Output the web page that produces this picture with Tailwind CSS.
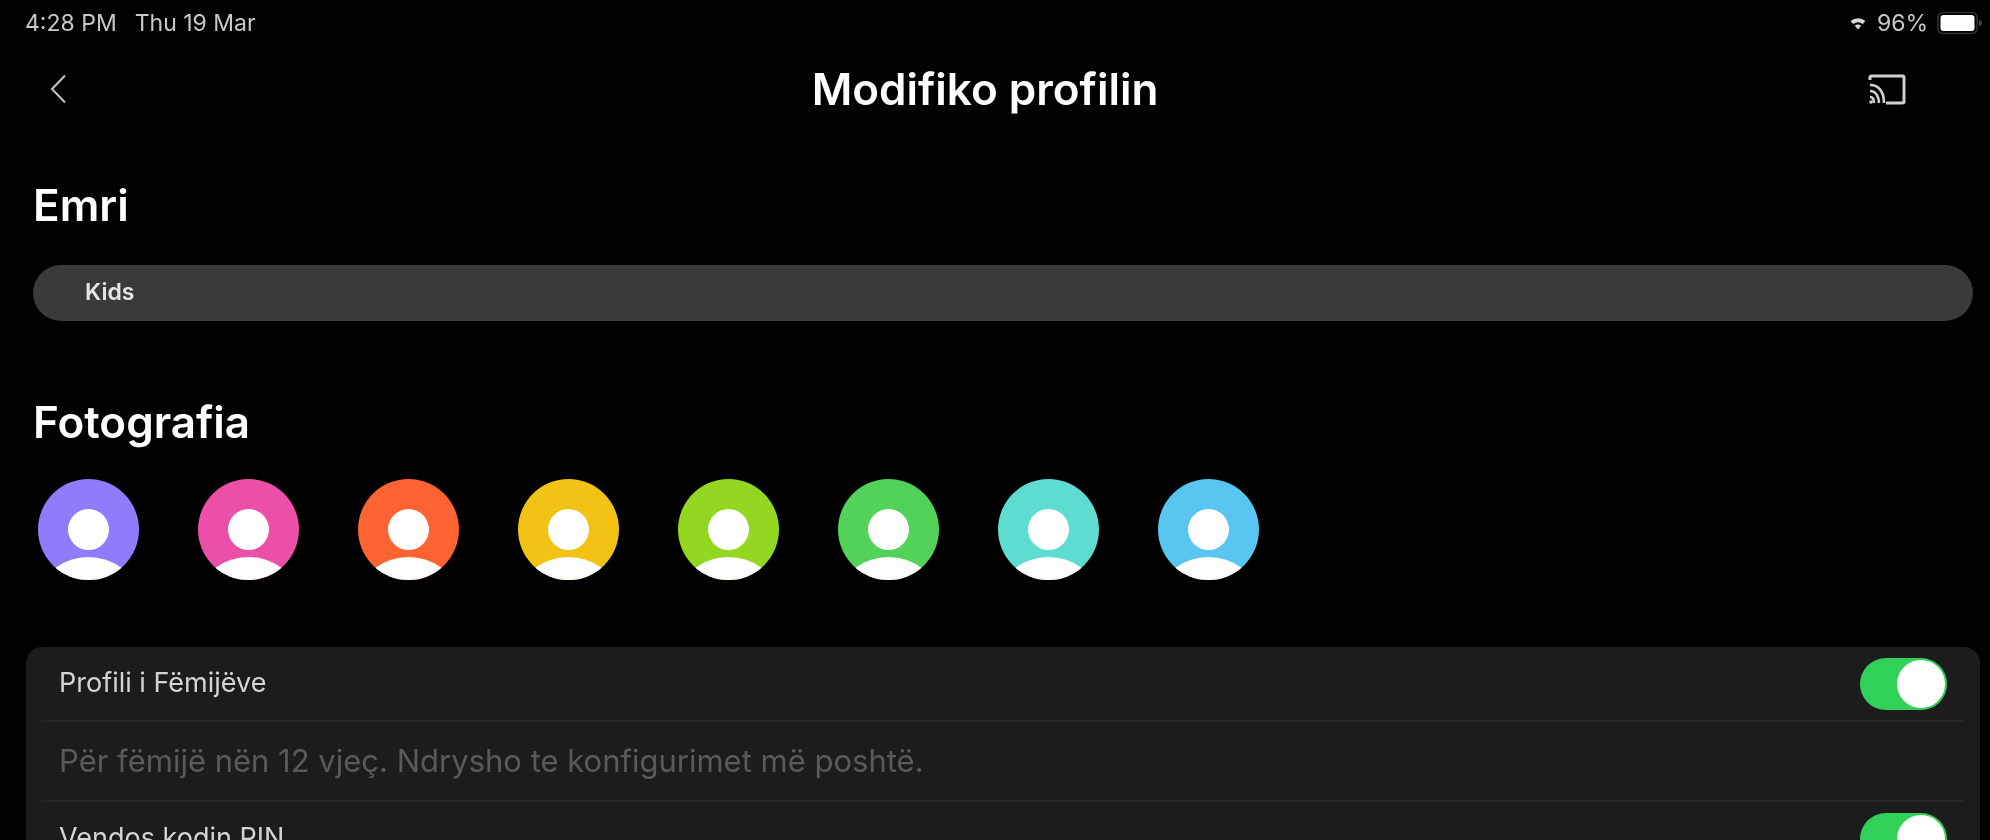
<!doctype html>
<html><head><meta charset="utf-8"><script src="https://cdn.jsdelivr.net/npm/@tailwindcss/browser@4"></script></head>
<body class="bg-black">
<div class="w-[1990px] h-[840px] overflow-hidden bg-black text-white font-['Inter',sans-serif] flex flex-col blur-[0.7px]">
  <div class="h-[46px] shrink-0 flex items-center justify-between pl-[25px] pr-[6px] text-[23px] text-[#c8c8c8]">
    <div class="flex gap-[18px]"><span>4:28 PM</span><span>Thu 19 Mar</span></div>
    <div class="flex items-center gap-[9px]">
      <svg width="20" height="16" viewBox="0 0 20 16" fill="#d8d8d8"><path d="M10 14.500 6.800 10.800a4.600 4.600 0 0 1 6.400 0zM5.200 9 2.600 6a11 11 0 0 1 14.800 0l-2.600 3a7.500 7.500 0 0 0-9.600 0z"/></svg>
      <span>96%</span>
      <svg width="47" height="24" viewBox="0 0 47 24"><rect x="1" y="1.500" width="39" height="21" rx="5" fill="none" stroke="#333" stroke-width="1.500"/><rect x="3.500" y="4" width="34" height="16" rx="3" fill="#fff"/><path d="M42 9v6a3 3 0 0 0 3-3 3 3 0 0 0-3-3z" fill="#444"/></svg>
    </div>
  </div>
  <div class="relative h-[86px] shrink-0 flex items-center justify-between pl-[49px] pr-[84px]">
    <svg width="18" height="30" viewBox="0 0 18 30" fill="none" stroke="#c4c4c4" stroke-width="2"><path d="M16 1.500 3 15l13 13.500"/></svg>
    <h1 class="absolute left-0 right-0 text-center text-[44px] font-semibold -translate-x-[10px]">Modifiko profilin</h1>
    <svg width="38" height="31" viewBox="0 0 38 31" fill="none" stroke="#d0d0d0" stroke-width="3"><path d="M2 6V3.500A1.500 1.500 0 0 1 3.500 2h31A1.500 1.500 0 0 1 36 3.500v24a1.500 1.500 0 0 1-1.500 1.500H18"/><path d="M2 11c9 0 14 7 14 18M2 17c6 0 9 6 9 12M2 23c3 0 4 3 4 6" stroke-width="2.600"/><circle cx="3" cy="28" r="1.800" fill="#d0d0d0" stroke="none"/></svg>
  </div>
  <div class="flex flex-col px-[33px] shrink-0">
    <h2 class="text-[44px] leading-[48px] font-semibold mt-[49px]">Emri</h2>
    <div class="mt-[36px] w-[1940px] h-[56px] rounded-full bg-[#3a3a3a] pl-[52px] flex items-center text-[23px] font-semibold text-[#e5e5e5]"><span class="-translate-y-[1px]">Kids</span></div>
    <h2 class="text-[44px] leading-[48px] font-semibold mt-[77px]">Fotografia</h2>
    <div class="mt-[33px] flex gap-[59px] pl-[5px]">
      <div class="w-[101px] h-[101px] rounded-full overflow-hidden bg-[#8f7bfb] relative"><span class="absolute left-[30px] top-[30px] w-[41px] h-[41px] rounded-full bg-white"></span><span class="absolute left-[5px] top-[78px] w-[91px] h-[70px] rounded-[50%] bg-white"></span></div>
      <div class="w-[101px] h-[101px] rounded-full overflow-hidden bg-[#ec4fa8] relative"><span class="absolute left-[30px] top-[30px] w-[41px] h-[41px] rounded-full bg-white"></span><span class="absolute left-[5px] top-[78px] w-[91px] h-[70px] rounded-[50%] bg-white"></span></div>
      <div class="w-[101px] h-[101px] rounded-full overflow-hidden bg-[#ff6332] relative"><span class="absolute left-[30px] top-[30px] w-[41px] h-[41px] rounded-full bg-white"></span><span class="absolute left-[5px] top-[78px] w-[91px] h-[70px] rounded-[50%] bg-white"></span></div>
      <div class="w-[101px] h-[101px] rounded-full overflow-hidden bg-[#f2c314] relative"><span class="absolute left-[30px] top-[30px] w-[41px] h-[41px] rounded-full bg-white"></span><span class="absolute left-[5px] top-[78px] w-[91px] h-[70px] rounded-[50%] bg-white"></span></div>
      <div class="w-[101px] h-[101px] rounded-full overflow-hidden bg-[#93d720] relative"><span class="absolute left-[30px] top-[30px] w-[41px] h-[41px] rounded-full bg-white"></span><span class="absolute left-[5px] top-[78px] w-[91px] h-[70px] rounded-[50%] bg-white"></span></div>
      <div class="w-[101px] h-[101px] rounded-full overflow-hidden bg-[#52d259] relative"><span class="absolute left-[30px] top-[30px] w-[41px] h-[41px] rounded-full bg-white"></span><span class="absolute left-[5px] top-[78px] w-[91px] h-[70px] rounded-[50%] bg-white"></span></div>
      <div class="w-[101px] h-[101px] rounded-full overflow-hidden bg-[#5fdcd0] relative"><span class="absolute left-[30px] top-[30px] w-[41px] h-[41px] rounded-full bg-white"></span><span class="absolute left-[5px] top-[78px] w-[91px] h-[70px] rounded-[50%] bg-white"></span></div>
      <div class="w-[101px] h-[101px] rounded-full overflow-hidden bg-[#58c6f0] relative"><span class="absolute left-[30px] top-[30px] w-[41px] h-[41px] rounded-full bg-white"></span><span class="absolute left-[5px] top-[78px] w-[91px] h-[70px] rounded-[50%] bg-white"></span></div>
    </div>
  </div>
  <div class="mt-[67px] ml-[26px] w-[1954px] rounded-[16px] bg-[#1c1c1e] flex flex-col shrink-0">
    <div class="mx-[16px] pl-[17px] pr-[17px] h-[75px] flex items-center justify-between border-b-2 border-[#252527] text-[27px] text-[#d4d4d4]">
      <span>Profili i Fëmijëve</span>
      <span class="relative w-[87px] h-[52px] rounded-full bg-[#30d158]"><span class="absolute right-[2px] top-[2px] w-[48px] h-[48px] rounded-full bg-white"></span></span>
    </div>
    <div class="mx-[16px] pl-[17px] h-[80px] flex items-center border-b-2 border-[#252527] text-[31px] text-[#5a5a5c]">Për fëmijë nën 12 vjeç. Ndrysho te konfigurimet më poshtë.</div>
    <div class="mx-[16px] pl-[17px] pr-[17px] h-[73px] flex items-center justify-between text-[27px] text-[#d4d4d4]">
      <span>Vendos kodin PIN</span>
      <span class="relative w-[87px] h-[52px] rounded-full bg-[#30d158]"><span class="absolute right-[2px] top-[2px] w-[48px] h-[48px] rounded-full bg-white"></span></span>
    </div>
  </div>
</div>
</body></html>
